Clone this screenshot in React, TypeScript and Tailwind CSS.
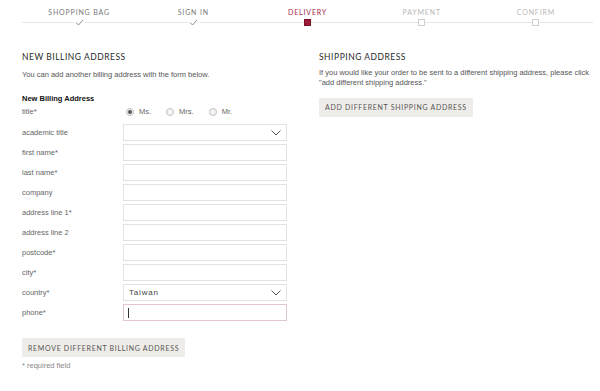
import React from 'react'

type Step = { label: string; state: 'done' | 'current' | 'todo' }

const steps: Step[] = [
  { label: 'Shopping Bag', state: 'done' },
  { label: 'Sign In', state: 'done' },
  { label: 'Delivery', state: 'current' },
  { label: 'Payment', state: 'todo' },
  { label: 'Confirm', state: 'todo' },
]

const heading = { fontFamily: '"Lato", "DejaVu Sans", sans-serif' }
const body = { fontFamily: '"Liberation Sans", Arial, sans-serif' }

function Marker({ state }: { state: Step['state'] }) {
  if (state === 'done') {
    return (
      <svg width="9" height="7" viewBox="0 0 9 7" className="mx-px">
        <polyline points="1,3.5 3.5,6 8,1" fill="none" stroke="#8a8a8a" strokeWidth="1" />
      </svg>
    )
  }
  if (state === 'current') {
    return <div className="w-[7px] h-[7px] bg-[#9b1c38] border border-[#7d1129]" />
  }
  return <div className="w-[7px] h-[7px] bg-white border border-[#cfcfcf]" />
}

function Stepper() {
  return (
    <div className="flex pl-[22px] pr-[7px] pt-[7px]" style={heading}>
      {steps.map((s) => (
        <div key={s.label} className="flex-1 flex flex-col items-center">
          <span
            className={
              'text-[7px] uppercase tracking-[0.12em] leading-[10px] ' +
              (s.state === 'done'
                ? 'text-[#7a7a7a]'
                : s.state === 'current'
                ? 'text-[#a3233f]'
                : 'text-[#b8b8b8]')
            }
          >
            {s.label}
          </span>
          <div className="w-full flex items-center h-[7px] mt-[2px]">
            <div className="flex-1 h-px bg-[#e6e6e6]" />
            <Marker state={s.state} />
            <div className="flex-1 h-px bg-[#e6e6e6]" />
          </div>
        </div>
      ))}
    </div>
  )
}

function Chevron() {
  return (
    <svg width="10" height="6" viewBox="0 0 10 6">
      <polyline points="0.5,0.5 5,5 9.5,0.5" fill="none" stroke="#555" strokeWidth="1" />
    </svg>
  )
}

function Row({ label, children }: { label: string; children?: React.ReactNode }) {
  return (
    <div className="flex items-center h-[20px]">
      <span className="w-[101px] text-[7.5px] text-[#666]">{label}</span>
      {children}
    </div>
  )
}

function TextInput({ focused }: { focused?: boolean }) {
  return (
    <div
      className={
        'w-[164px] h-[17px] bg-white border flex items-center px-[4px] ' +
        (focused ? 'border-[#e3c6ca]' : 'border-[#e2e2e2]')
      }
    >
      {focused && <div className="w-px h-[10px] bg-[#333]" />}
    </div>
  )
}

function SelectInput({ value }: { value?: string }) {
  return (
    <div className="w-[164px] h-[17px] bg-white border border-[#e2e2e2] flex items-center justify-between pl-[5px] pr-[5px]">
      <span className="text-[8px] text-[#444] tracking-[0.1em]">{value}</span>
      <Chevron />
    </div>
  )
}

function Radio({ label, checked }: { label: string; checked?: boolean }) {
  return (
    <div className="flex items-center gap-[5px] mr-[15px]">
      <div className="w-[8px] h-[8px] rounded-full border border-[#c2c2c2] bg-[#f4f4f4] flex items-center justify-center">
        {checked && <div className="w-[4px] h-[4px] rounded-full bg-[#555]" />}
      </div>
      <span className="text-[7.5px] text-[#666]">{label}</span>
    </div>
  )
}

function GreyButton({ children }: { children: React.ReactNode }) {
  return (
    <div
      className="inline-flex items-center h-[19px] px-[6px] bg-[#efede9] text-[7px] uppercase tracking-[0.1em] text-[#555]"
      style={heading}
    >
      {children}
    </div>
  )
}

export default function App() {
  return (
    <div className="w-[600px] h-[391px] bg-white overflow-hidden" style={body}>
      <Stepper />

      <div className="flex pl-[22px] pr-[8px] pt-[25px]">
        {/* Billing */}
        <div className="w-[297px]">
          <h2 className="text-[8.5px] uppercase tracking-[0.06em] text-[#2a2a2a] leading-[12px]" style={heading}>
            New Billing Address
          </h2>
          <p className="text-[7.5px] text-[#555] mt-[6px]">
            You can add another billing address with the form below.
          </p>
          <p className="text-[7.5px] font-bold text-[#111] mt-[13px]">New Billing Address</p>

          <div>
            <div className="flex items-center h-[15px]">
              <span className="w-[104px] text-[7.5px] text-[#666]">title*</span>
              <Radio label="Ms." checked />
              <Radio label="Mrs." />
              <Radio label="Mr." />
            </div>
            <div className="h-[3px]" />
            <Row label="academic title"><SelectInput /></Row>
            <Row label="first name*"><TextInput /></Row>
            <Row label="last name*"><TextInput /></Row>
            <Row label="company"><TextInput /></Row>
            <Row label="address line 1*"><TextInput /></Row>
            <Row label="address line 2"><TextInput /></Row>
            <Row label="postcode*"><TextInput /></Row>
            <Row label="city*"><TextInput /></Row>
            <Row label="country*"><SelectInput value="Taiwan" /></Row>
            <Row label="phone*"><TextInput focused /></Row>
          </div>

          <div className="mt-[11px]">
            <GreyButton>Remove different billing address</GreyButton>
          </div>
          <p className="text-[7.5px] text-[#888] mt-[2px]">* required field</p>
        </div>

        {/* Shipping */}
        <div className="flex-1">
          <h2 className="text-[8.5px] uppercase tracking-[0.06em] text-[#2a2a2a] leading-[12px]" style={heading}>
            Shipping Address
          </h2>
          <p className="text-[7.5px] text-[#555] mt-[5px] leading-[10px]">
            If you would like your order to be sent to a different shipping address, please click
            "add different shipping address."
          </p>
          <div className="mt-[5px]">
            <GreyButton>Add different shipping address</GreyButton>
          </div>
        </div>
      </div>
    </div>
  )
}
